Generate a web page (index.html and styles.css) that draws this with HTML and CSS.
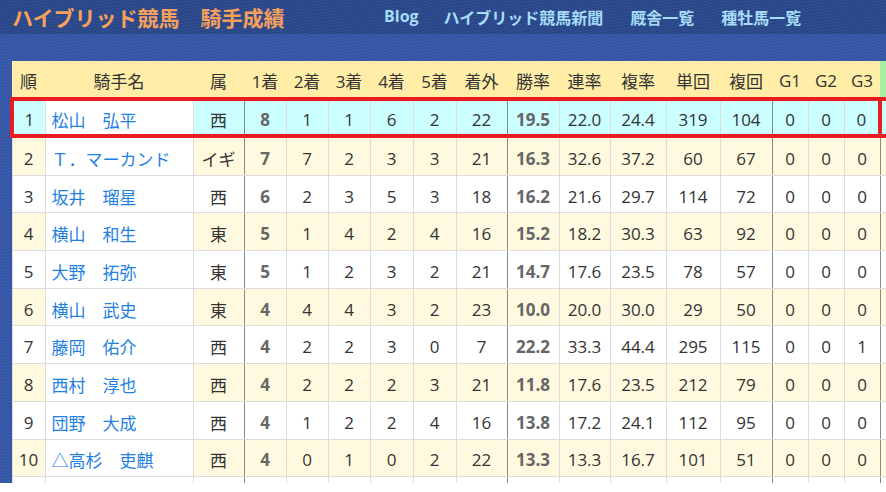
FILE: index.html
```html
<!DOCTYPE html>
<html lang="ja">
<head>
<meta charset="utf-8">
<title>ハイブリッド競馬　騎手成績</title>
<link rel="stylesheet" href="styles.css">
</head>
<body>
<div class="page">
  <header class="topbar">
    <div class="title">ハイブリッド競馬　騎手成績</div>
    <nav class="nav">
      <a href="#" class="blog">Blog</a>
      <a href="#">ハイブリッド競馬新聞</a>
      <a href="#">厩舎一覧</a>
      <a href="#">種牡馬一覧</a>
    </nav>
  </header>
  <main class="content">
    <div class="tablewrap">
      <table class="stats">
        <colgroup>
          <col class="c-rank"><col class="c-name"><col class="c-area">
          <col class="c-n1"><col class="c-n2"><col class="c-n3"><col class="c-n4"><col class="c-n5"><col class="c-out">
          <col class="c-win"><col class="c-ren"><col class="c-fuku"><col class="c-tan"><col class="c-fkk">
          <col class="c-g"><col class="c-g"><col class="c-g"><col class="c-extra">
        </colgroup>
        <thead>
          <tr>
            <th>順</th><th>騎手名</th><th>属</th>
            <th>1着</th><th>2着</th><th>3着</th><th>4着</th><th>5着</th><th>着外</th>
            <th>勝率</th><th>連率</th><th>複率</th><th>単回</th><th>複回</th>
            <th>G1</th><th>G2</th><th>G3</th><th class="extra"></th>
          </tr>
        </thead>
        <tbody>
          <tr class="hl">
            <td class="rank">1</td><td class="name"><a href="#">松山　弘平</a></td><td class="area">西</td>
            <td class="b">8</td><td>1</td><td>1</td><td>6</td><td>2</td><td class="sep">22</td>
            <td class="b">19.5</td><td>22.0</td><td>24.4</td><td>319</td><td class="sep">104</td>
            <td>0</td><td>0</td><td class="last">0</td><td></td>
          </tr>
          <tr class="alt">
            <td class="rank">2</td><td class="name"><a href="#">Ｔ．マーカンド</a></td><td class="area">イギ</td>
            <td class="b">7</td><td>7</td><td>2</td><td>3</td><td>3</td><td class="sep">21</td>
            <td class="b">16.3</td><td>32.6</td><td>37.2</td><td>60</td><td class="sep">67</td>
            <td>0</td><td>0</td><td class="last">0</td><td></td>
          </tr>
          <tr>
            <td class="rank">3</td><td class="name"><a href="#">坂井　瑠星</a></td><td class="area">西</td>
            <td class="b">6</td><td>2</td><td>3</td><td>5</td><td>3</td><td class="sep">18</td>
            <td class="b">16.2</td><td>21.6</td><td>29.7</td><td>114</td><td class="sep">72</td>
            <td>0</td><td>0</td><td class="last">0</td><td></td>
          </tr>
          <tr class="alt">
            <td class="rank">4</td><td class="name"><a href="#">横山　和生</a></td><td class="area">東</td>
            <td class="b">5</td><td>1</td><td>4</td><td>2</td><td>4</td><td class="sep">16</td>
            <td class="b">15.2</td><td>18.2</td><td>30.3</td><td>63</td><td class="sep">92</td>
            <td>0</td><td>0</td><td class="last">0</td><td></td>
          </tr>
          <tr>
            <td class="rank">5</td><td class="name"><a href="#">大野　拓弥</a></td><td class="area">東</td>
            <td class="b">5</td><td>1</td><td>2</td><td>3</td><td>2</td><td class="sep">21</td>
            <td class="b">14.7</td><td>17.6</td><td>23.5</td><td>78</td><td class="sep">57</td>
            <td>0</td><td>0</td><td class="last">0</td><td></td>
          </tr>
          <tr class="alt">
            <td class="rank">6</td><td class="name"><a href="#">横山　武史</a></td><td class="area">東</td>
            <td class="b">4</td><td>4</td><td>4</td><td>3</td><td>2</td><td class="sep">23</td>
            <td class="b">10.0</td><td>20.0</td><td>30.0</td><td>29</td><td class="sep">50</td>
            <td>0</td><td>0</td><td class="last">0</td><td></td>
          </tr>
          <tr>
            <td class="rank">7</td><td class="name"><a href="#">藤岡　佑介</a></td><td class="area">西</td>
            <td class="b">4</td><td>2</td><td>2</td><td>3</td><td>0</td><td class="sep">7</td>
            <td class="b">22.2</td><td>33.3</td><td>44.4</td><td>295</td><td class="sep">115</td>
            <td>0</td><td>0</td><td class="last">1</td><td></td>
          </tr>
          <tr class="alt">
            <td class="rank">8</td><td class="name"><a href="#">西村　淳也</a></td><td class="area">西</td>
            <td class="b">4</td><td>2</td><td>2</td><td>2</td><td>3</td><td class="sep">21</td>
            <td class="b">11.8</td><td>17.6</td><td>23.5</td><td>212</td><td class="sep">79</td>
            <td>0</td><td>0</td><td class="last">0</td><td></td>
          </tr>
          <tr>
            <td class="rank">9</td><td class="name"><a href="#">団野　大成</a></td><td class="area">西</td>
            <td class="b">4</td><td>1</td><td>2</td><td>2</td><td>4</td><td class="sep">16</td>
            <td class="b">13.8</td><td>17.2</td><td>24.1</td><td>112</td><td class="sep">95</td>
            <td>0</td><td>0</td><td class="last">0</td><td></td>
          </tr>
          <tr class="alt">
            <td class="rank">10</td><td class="name"><a href="#">△高杉　吏麒</a></td><td class="area">西</td>
            <td class="b">4</td><td>0</td><td>1</td><td>0</td><td>2</td><td class="sep">22</td>
            <td class="b">13.3</td><td>13.3</td><td>16.7</td><td>101</td><td class="sep">51</td>
            <td>0</td><td>0</td><td class="last">0</td><td></td>
          </tr>
          <tr>
            <td class="rank"></td><td class="name"></td><td class="area"></td>
            <td class="b"></td><td></td><td></td><td></td><td></td><td class="sep"></td>
            <td class="b"></td><td></td><td></td><td></td><td class="sep"></td>
            <td></td><td></td><td class="last"></td><td></td>
          </tr>
        </tbody>
      </table>
    </div>
  </main>
</div>
</body>
</html>
```

FILE: styles.css
```css
html, body {
  margin: 0;
  padding: 0;
  background: #ffffff;
}

body {
  font-family: "Open Sans", "Noto Sans CJK JP", sans-serif;
  color: #333333;
}

.page {
  height: 483px;
  overflow: hidden;
  background-color: #3758aa;
  background-image: repeating-linear-gradient(172deg, rgba(255,255,255,0.025) 0 1px, rgba(0,0,0,0.03) 1px 3px);
}

.topbar {
  height: 34px;
  display: flex;
  align-items: center;
  background-color: #2c4a8e;
  background-image: repeating-linear-gradient(172deg, rgba(255,255,255,0.025) 0 1px, rgba(0,0,0,0.04) 1px 3px);
}

.title {
  width: 372px;
  padding-left: 12px;
  font-family: "Noto Sans CJK JP", sans-serif;
  font-weight: 700;
  font-size: 21px;
  color: #f6a05c;
  white-space: nowrap;
}

.nav {
  display: flex;
  gap: 27px;
}

.nav a {
  font-family: "Noto Sans CJK JP", sans-serif;
  font-weight: 700;
  font-size: 16px;
  color: #a6dcfa;
  text-decoration: none;
  white-space: nowrap;
}

.nav a.blog {
  font-family: "Open Sans", sans-serif;
  margin-right: -2px;
}

.content {
  padding: 27px 0 0 10px;
}

.tablewrap {
  overflow: hidden;
}

.stats {
  border-collapse: collapse;
  table-layout: fixed;
  width: 980px;
  font-size: 17px;
}

.c-rank { width: 33px; }
.c-name { width: 148px; }
.c-area { width: 51px; }
.c-n1 { width: 42px; }
.c-n2 { width: 42px; }
.c-n3 { width: 42px; }
.c-n4 { width: 43px; }
.c-n5 { width: 43px; }
.c-out { width: 51px; }
.c-win { width: 52px; }
.c-ren { width: 51px; }
.c-fuku { width: 56px; }
.c-tan { width: 54px; }
.c-fkk { width: 52px; }
.c-g { width: 36px; }
.c-extra { width: 113px; }

.stats th {
  height: 33px;
  padding: 3px 0 0;
  background: #ffeda8;
  font-weight: 400;
  color: #333333;
  text-align: center;
  white-space: nowrap;
  border: none;
}

.stats th.extra {
  background: #a8efa2;
}

.stats td {
  height: 32.7px;
  padding: 4px 0 0;
  text-align: center;
  white-space: nowrap;
  background: #ffffff;
  border: 1px solid #dcdcdc;
}

.stats tr.alt td {
  background: #fffadf;
}

.stats td.name {
  text-align: left;
  padding-left: 6px;
  background: #ffffff;
  font-family: "Noto Sans CJK JP", sans-serif;
}

.stats tr.alt td.name {
  background: #ffffff;
}

.stats td.name a {
  color: #1f7fe2;
  text-decoration: none;
}

.stats td.area {
  font-family: "Noto Sans CJK JP", sans-serif;
  border-right: 1px solid #8a8a8a;
}

.stats td.sep,
.stats td.last {
  border-right: 1px solid #8a8a8a;
}

.stats td.b {
  font-weight: 700;
  color: #666666;
}

.stats tr.hl td {
  height: 29px;
  background: #ccffff;
  border-top: 4px solid #e91c24;
  border-bottom: 4px solid #e91c24;
}

.stats tr.hl td.name {
  background: #ffffff;
}

.stats tr.hl td.rank {
  border-left: 4px solid #e91c24;
}

.stats tr.hl td.last {
  border-right: 4px solid #e91c24;
}
```
